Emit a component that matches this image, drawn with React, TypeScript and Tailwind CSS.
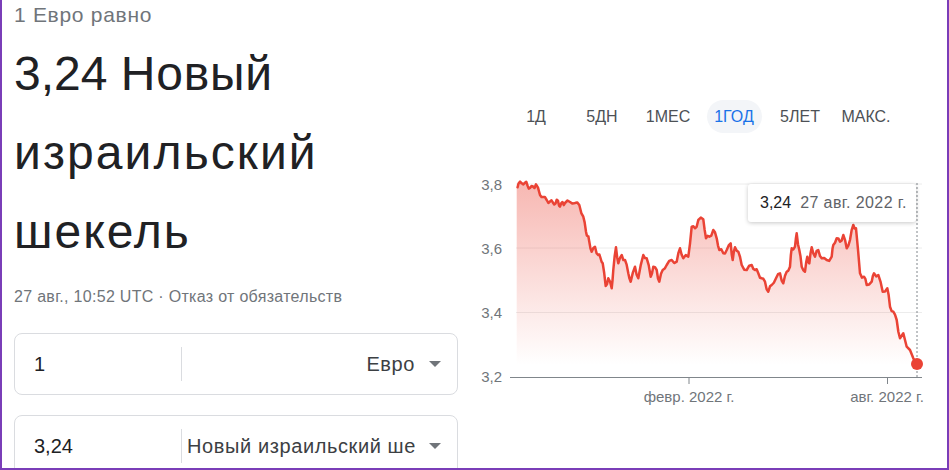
const base: [number, number][] = [
  [516.7, 186.7], [518.5, 183.5], [521.7, 183.3], [525, 182.7], [527.5, 185.5], [530, 188], [533, 186.5], [536, 184.3],
  [540, 195], [543, 197], [546.7, 200], [550, 201.5], [553, 202.7], [555.5, 203.5], [558, 200.7], [560, 206.7],
  [562.5, 202], [565, 203], [570, 202], [575, 203], [579.3, 205], [583.3, 216.7], [586, 231.7], [587.5, 236],
  [589.3, 241.7], [591.7, 251.7], [595, 246.7], [598.3, 255], [600.5, 258], [602.7, 263.3], [605.7, 286],
  [608.3, 278.3], [611.7, 288.3], [613.3, 270], [616, 247.3], [618.3, 263.3], [621.7, 255], [625, 260],
  [628.3, 273.3], [630.7, 281.7], [635, 266.7], [638.3, 278.3], [643.3, 255], [646.7, 258.3], [650.7, 276.7],
  [653.3, 266.7], [656.7, 270], [659.3, 281.7], [662.7, 270], [666.7, 265], [671.7, 260], [676.7, 261.7],
  [680, 248.3], [683.3, 258.3], [688.3, 256.7], [691.7, 226.7], [695, 228.3], [698.3, 220], [703.3, 219.3],
  [706, 238.3], [709.3, 236.7], [713.3, 230], [716.7, 238.3], [719.3, 250], [723.3, 253.3], [726.7, 250],
  [730.7, 243.3], [732.7, 260], [735, 247.3], [738.3, 251.7], [741.7, 265], [746.7, 270], [751.7, 265],
  [755, 270], [758.3, 273.3], [761.7, 278.3], [765, 281.7], [768.3, 291.7], [771.7, 285], [776, 278.3],
  [780, 273.3], [783.3, 283.3], [786.7, 271.7], [790, 266.7], [791.7, 248.3], [795, 246.7], [796.7, 233.3],
  [799.3, 250], [801.7, 266.7], [805, 271.7], [807.3, 256.7], [809.3, 263.3], [811.7, 247.3], [815, 256.7],
  [818.3, 250], [821.7, 258.3], [826.7, 260], [831.7, 256.7], [833.3, 245], [836.7, 238.3], [840, 241.7],
  [843.3, 235], [846.7, 248.3], [850, 240], [853.3, 225], [856, 228.3], [860, 273.3], [864, 276.7],
  [866.7, 285], [871.7, 281.7], [874, 273.3], [878.3, 275], [882.7, 291.7], [887.3, 288.3], [890, 306.7],
  [893.3, 311.7], [896.7, 320], [900, 338.3], [903.3, 333.3], [906.7, 346.7], [910, 350], [913.3, 358.3],
  [916.7, 364],
];

// add a bit of day-to-day jitter between the traced points
const jitter = [2.2, -1.8, 1.4, -2.4, 1.9, -1.2, 2.6, -2, 1.1, -1.6];
const pts: [number, number][] = [];
base.forEach((p, i) => {
  pts.push(p);
  const n = base[i + 1];
  if (n && i < base.length - 6) {
    pts.push([(p[0] + n[0]) / 2, (p[1] + n[1]) / 2 + jitter[i % jitter.length]]);
  }
});

const line = pts.map(([x, y], i) => `${i ? "L" : "M"}${x} ${y}`).join(" ");
const area = `${line} L916.7 377 L516.7 377 Z`;

const tabs = ["1Д", "5ДН", "1МЕС", "1ГОД", "5ЛЕТ", "МАКС."];

function Chart() {
  return (
    <svg width={460} height={245} viewBox="470 165 460 245" className="block">
      <defs>
        <linearGradient id="fill" x1="0" y1="183" x2="0" y2="365" gradientUnits="userSpaceOnUse">
          <stop offset="0" stopColor="#ea4335" stopOpacity="0.38" />
          <stop offset="1" stopColor="#ea4335" stopOpacity="0" />
        </linearGradient>
      </defs>
      {[184, 248, 312.5].map((y) => (
        <line key={y} x1={516} x2={922} y1={y} y2={y} stroke="#ececec" strokeWidth={1} />
      ))}
      <g fill="#70757a" fontSize={15} fontFamily="'Liberation Sans', Arial, sans-serif" textAnchor="end">
        <text x={502} y={190}>3,8</text>
        <text x={502} y={253.5}>3,6</text>
        <text x={502} y={318}>3,4</text>
        <text x={502} y={382}>3,2</text>
      </g>
      <path d={area} fill="url(#fill)" />
      <path d={line} fill="none" stroke="#ea4335" strokeWidth={2.5} strokeLinejoin="round" />
      <line x1={510} x2={922} y1={377.5} y2={377.5} stroke="#80868b" strokeWidth={1} />
      <line x1={689} x2={689} y1={377} y2={384} stroke="#80868b" strokeWidth={1} />
      <line x1={887.5} x2={887.5} y1={377} y2={384} stroke="#80868b" strokeWidth={1} />
      <g fill="#70757a" fontSize={15} fontFamily="'Liberation Sans', Arial, sans-serif" textAnchor="middle">
        <text x={689} y={402}>февр. 2022 г.</text>
        <text x={887} y={402}>авг. 2022 г.</text>
      </g>
      <line x1={917} x2={917} y1={183} y2={377} stroke="#80868b" strokeWidth={1} strokeDasharray="2 2" />
      <circle cx={917} cy={364} r={6} fill="#ea4335" />
    </svg>
  );
}

function Field({ value, unit }: { value: string; unit: string }) {
  return (
    <div className="flex h-[62px] w-[444px] shrink-0 items-center rounded-[8px] border border-[#dadce0] bg-white">
      <div className="w-[166px] shrink-0 pl-[19px] text-[20px] text-[#202124]">{value}</div>
      <div className="h-[34px] w-px shrink-0 bg-[#dadce0]" />
      <div className="flex min-w-0 flex-1 items-center justify-end">
        <span className="min-w-0 overflow-hidden whitespace-nowrap pl-[5px] text-[20px] tracking-[0.6px] text-[#3c4043]">
          {unit}
        </span>
        <span className="ml-[14px] mr-[16px] h-0 w-0 shrink-0 border-x-[6.5px] border-t-[6.5px] border-x-transparent border-t-[#70757a]" />
      </div>
    </div>
  );
}

export default function App() {
  return (
    <div className="flex h-[470px] w-[949px] overflow-hidden border-x-2 border-b-2 border-[#7a3db8] bg-white font-['Liberation_Sans',Arial,sans-serif]">
      <div className="ml-[12px] flex w-[444px] shrink-0 flex-col">
        <div className="text-[21px] leading-[30px] tracking-[0.7px] text-[#70757a]">1 Евро равно</div>
        <div className="mt-[4px] text-[48px] leading-[79px] text-[#202124]">
          <div>
            3,24 <span className="tracking-[0.8px]">Новый</span>
          </div>
          <div className="tracking-[2.1px]">израильский</div>
          <div className="tracking-[2px]">шекель</div>
        </div>
        <div className="mt-[16px] text-[16px] leading-[20px] tracking-[0.3px] text-[#70757a]">
          27 авг., 10:52 UTC · Отказ от обязательств
        </div>
        <div className="mt-[26px] flex flex-col gap-[20px]">
          <Field value="1" unit="Евро" />
          <Field value="3,24" unit="Новый израильский шекель" />
        </div>
      </div>
      <div className="relative ml-[12px] flex flex-col">
        <div className="mt-[100px] flex pl-[33px]">
          {tabs.map((t) => (
            <div key={t} className="flex w-[66px] justify-center">
              <span
                className={
                  t === "1ГОД"
                    ? "flex h-[33px] w-[55px] items-center justify-center rounded-full bg-[#f3f5f8] text-[16px] text-[#1a73e8]"
                    : "flex h-[33px] items-center justify-center text-[16px] text-[#4d5156]"
                }
              >
                {t}
              </span>
            </div>
          ))}
        </div>
        <div className="mt-[32px]">
          <Chart />
        </div>
        <div className="absolute left-[278px] top-[184px] flex h-[38px] w-[168px] items-center gap-[9px] rounded-[3px] bg-white pl-[12px] text-[16px] shadow-[0_1px_4px_rgba(0,0,0,0.22)]">
          <span className="text-[#202124]">3,24</span>
          <span className="tracking-[0.4px] text-[#5f6368]">27 авг. 2022 г.</span>
        </div>
      </div>
    </div>
  );
}
